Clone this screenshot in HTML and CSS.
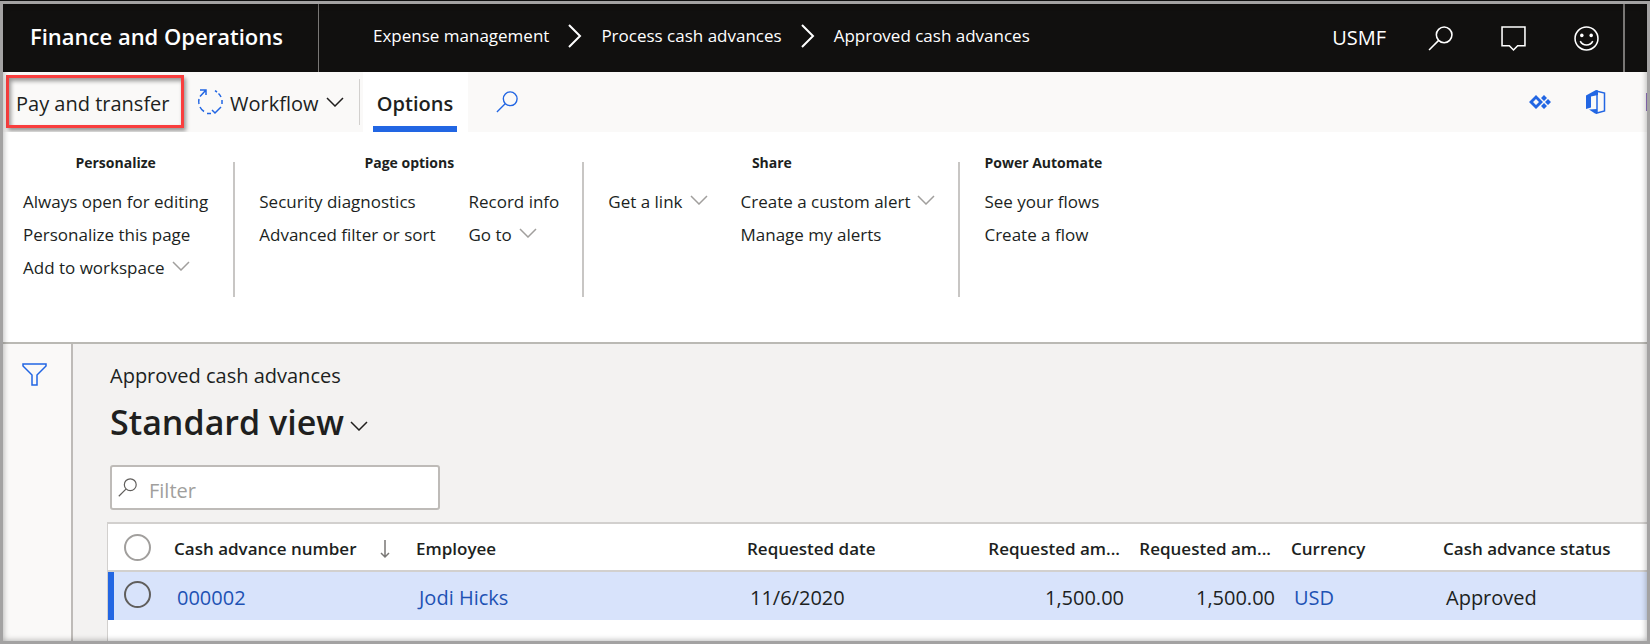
FILE: index.html
```html
<!DOCTYPE html>
<html lang="en">
<head>
<meta charset="utf-8">
<title>Approved cash advances</title>
<link rel="stylesheet" href="styles.css">
</head>
<body>
<svg class="defs" aria-hidden="true">
  <symbol id="search" viewBox="0 0 24 24"><circle cx="15.5" cy="8.5" r="7.5"/><path d="M10 14L1 23"/></symbol>
  <symbol id="down" viewBox="0 0 18 10"><path d="M1 1l8 8 8-8"/></symbol>
  <symbol id="right" viewBox="0 0 14 24"><path d="M1 1l11 11L1 23"/></symbol>
</svg>
<div class="frame">
  <header class="topbar">
    <a class="brand" href="#">Finance and Operations</a>
    <nav class="crumbs" aria-label="Breadcrumb">
      <a href="#">Expense management</a>
      <svg class="icon crumb-sep"><use href="#right"/></svg>
      <a href="#">Process cash advances</a>
      <svg class="icon crumb-sep"><use href="#right"/></svg>
      <a href="#">Approved cash advances</a>
    </nav>
    <div class="tools">
      <button class="company">USMF</button>
      <div class="tool-icons">
        <button aria-label="Search"><svg class="icon i24"><use href="#search"/></svg></button>
        <button aria-label="Messages"><svg class="icon i24" viewBox="0 0 24 24"><path d="M1 1h22v18h-7l-4 4-4-4H1z"/></svg></button>
        <button aria-label="Feedback"><svg class="icon i24" viewBox="0 0 24 24"><circle cx="12" cy="12" r="11"/><path d="M6 14.500c2.500 5 9.500 5 12 0"/><g class="solid"><circle cx="7.500" cy="9" r="1.700"/><circle cx="16.500" cy="9" r="1.700"/></g></svg></button>
      </div>
    </div>
    <div class="edge"></div>
  </header>

  <div class="actions">
    <button class="pay">Pay and transfer</button>
    <button class="workflow">
      <svg class="icon i26 blue" viewBox="0 0 26 26"><path d="M3 1h6v5M9 1L3 7.500M2 10a11 11 0 0 0 0 5M3 18a11 11 0 0 0 4 4.500M10 24.500h4M15 21l3 3 6-6M25 15v-4M24 8a11 11 0 0 0-2.500-3.500M20 3l-2-1.300"/></svg>
      <span>Workflow</span>
      <svg class="icon chev"><use href="#down"/></svg>
    </button>
    <button class="tab">Options</button>
    <button class="find" aria-label="Search actions"><svg class="icon blue"><use href="#search"/></svg></button>
    <div class="apps">
      <button aria-label="Power Apps"><svg class="icon-fill" viewBox="0 0 22 14"><path fill-rule="evenodd" d="M7 0l7 7-7 7-7-7zM7 4L4 7l3 3 3-3z"/><path d="M15 0l3 3-3 3-3-3zM19 4l3 3-3 3-3-3zM15 8l3 3-3 3-3-3z"/></svg></button>
      <button aria-label="Office"><svg class="office" viewBox="0 0 20 24"><path class="solid" d="M0 5.500L10 0l2 .6V5L5 6.500v11L0 19z"/><path class="solid" d="M3 19.500l8-.5v5l-2-.5z"/><path class="line" d="M10 1l8.500 2v18L11 23V3"/></svg></button>
    </div>
    <div class="cut"></div>
  </div>

  <section class="ribbon">
    <div class="group">
      <h2>Personalize</h2>
      <div class="cols"><div class="col">
        <button>Always open for editing</button>
        <button>Personalize this page</button>
        <button>Add to workspace <svg class="icon chev grey"><use href="#down"/></svg></button>
      </div></div>
    </div>
    <div class="group">
      <h2>Page options</h2>
      <div class="cols">
        <div class="col">
          <button>Security diagnostics</button>
          <button>Advanced filter or sort</button>
        </div>
        <div class="col">
          <button>Record info</button>
          <button>Go to <svg class="icon chev grey"><use href="#down"/></svg></button>
        </div>
      </div>
    </div>
    <div class="group">
      <h2>Share</h2>
      <div class="cols">
        <div class="col">
          <button>Get a link <svg class="icon chev grey"><use href="#down"/></svg></button>
        </div>
        <div class="col">
          <button>Create a custom alert <svg class="icon chev grey"><use href="#down"/></svg></button>
          <button>Manage my alerts</button>
        </div>
      </div>
    </div>
    <div class="group">
      <h2>Power Automate</h2>
      <div class="cols"><div class="col">
        <button>See your flows</button>
        <button>Create a flow</button>
      </div></div>
    </div>
  </section>

  <div class="body">
    <aside class="rail">
      <button aria-label="Show filters"><svg class="icon blue funnel" viewBox="0 0 25 23"><path d="M1 1h23v2l-9 9v10h-5V12L1 3z"/></svg></button>
    </aside>
    <main class="main">
      <p class="caption">Approved cash advances</p>
      <h1><button>Standard view <svg class="icon chev"><use href="#down"/></svg></button></h1>
      <label class="filter">
        <svg class="icon"><use href="#search"/></svg>
        <input type="text" placeholder="Filter" aria-label="Filter">
      </label>
      <div class="grid">
        <table>
          <colgroup><col class="c-mark"><col class="c-num"><col class="c-emp"><col class="c-date"><col class="c-amt"><col class="c-amt"><col class="c-cur"><col></colgroup>
          <thead>
            <tr>
              <th><input type="radio" name="all" aria-label="Select all"></th>
              <th><div class="sorted">Cash advance number <svg class="icon sort" viewBox="0 0 10 20"><path d="M5 1v17M1 14l4 4 4-4"/></svg></div></th>
              <th>Employee</th>
              <th>Requested date</th>
              <th class="num">Requested am...</th>
              <th class="num">Requested am...</th>
              <th class="cur">Currency</th>
              <th>Cash advance status</th>
            </tr>
          </thead>
          <tbody>
            <tr>
              <td><input type="radio" name="row" aria-label="Select 000002"></td>
              <td><a href="#">000002</a></td>
              <td><a href="#">Jodi Hicks</a></td>
              <td>11/6/2020</td>
              <td class="num">1,500.00</td>
              <td class="num">1,500.00</td>
              <td class="cur"><a href="#">USD</a></td>
              <td>Approved</td>
            </tr>
          </tbody>
        </table>
      </div>
    </main>
  </div>
</div>
</body>
</html>
```
FILE: styles.css
```css
* { box-sizing: border-box; }
body {
  margin: 0;
  border-top: 1px solid #111;
  font-family: "Open Sans", "Noto Sans", sans-serif;
  font-size: 17px;
  line-height: 24px;
  color: #201f1e;
}
button { font: inherit; color: inherit; background: none; border: 0; padding: 0; white-space: nowrap; text-align: left; }
a { color: inherit; text-decoration: none; }
h1, h2, p { margin: 0; }
.defs { position: absolute; width: 0; height: 0; }
.icon { flex: none; fill: none; stroke: currentColor; stroke-width: 1.5; overflow: visible; }
.solid { fill: currentColor; stroke: none; }
.i24 { display: block; width: 25px; height: 25px; }
.i26 { width: 26px; height: 26px; }
.blue { color: #2266e3; }
.grey { color: #a19f9d; }
.chev { width: 18px; height: 10px; }

.frame {
  position: relative;
  display: flex;
  flex-direction: column;
  min-height: calc(100vh - 1px);
  border: 3px solid #a3a2a2;
}
.frame::after {
  content: "";
  position: absolute;
  inset: 0;
  box-shadow: inset 0 0 6px rgba(0, 0, 0, .35);
  pointer-events: none;
}

.topbar { display: flex; align-items: center; height: 68px; background: #11100f; color: #fff; }
.brand {
  display: flex;
  align-items: center;
  align-self: stretch;
  width: 316px;
  padding: 0 0 4px 27px;
  border-right: 1px solid #797775;
  font-size: 22px;
  font-weight: 600;
}
.crumbs { display: flex; align-items: center; gap: 19px; padding: 0 0 4px 54px; }
.crumb-sep { width: 14px; height: 24px; stroke-width: 2; }
.tools { display: flex; align-items: center; gap: 42px; margin-left: auto; padding-right: 24px; }
.tool-icons { display: flex; gap: 48px; }
.company { font-size: 20px; }
.edge { align-self: stretch; width: 24px; border-left: 2px solid #797775; }

.actions { display: flex; align-items: center; height: 60px; background: #faf9f8; font-size: 20px; }
.pay {
  height: 53px;
  width: 178px;
  margin: 0 13px 2px 3px;
  padding: 5px 0 0 7px;
  border: 3px solid #f93e3e;
  box-shadow: 2px 3px 4px rgba(0, 0, 0, .4), inset 2px 3px 4px rgba(0, 0, 0, .4);
}
.workflow { display: flex; align-items: center; gap: 7px; height: 46px; padding-right: 15px; border-right: 1px solid #d2d0ce; }
.workflow span { padding-top: 4px; }
.tab { position: relative; align-self: stretch; width: 105px; margin-left: 3px; padding-top: 4px; background: #fff; font-weight: 600; text-align: center; }
.tab::after { content: ""; position: absolute; left: 10px; right: 11px; bottom: 0; height: 6px; background: #2266e3; }
.find { margin-left: 28px; }
.find .icon { display: block; width: 22px; height: 22px; }
.apps { display: flex; align-items: center; gap: 35px; margin-left: auto; padding-right: 40px; }
.icon-fill { display: block; width: 22px; height: 14px; fill: #2266e3; }
.office { display: block; width: 20px; height: 24px; color: #2266e3; }
.line { fill: none; stroke: currentColor; stroke-width: 1.5; }
.cut { width: 1px; height: 18px; background: #9373c0; }

.ribbon { display: flex; height: 212px; padding: 20px 0 45px; background: #fff; border-bottom: 2px solid #bab9b4; }
.group { padding: 0 23px 0 24px; border-left: 2px solid #c8c6c4; margin-top: 10px; }
.group:first-child { padding: 0 25px 0 20px; border-left: 0; }
.group h2 { margin: -10px 0 11px; font-size: 14px; line-height: 22px; font-weight: 700; text-align: center; }
.cols { display: flex; gap: 33px; }
.col { display: flex; flex-direction: column; align-items: flex-start; }
.col button { display: flex; align-items: center; gap: 7px; height: 33px; }
.col .chev { margin-bottom: 3px; }

.body { display: flex; flex: 1; background: #f3f2f1; }
.rail { width: 70px; padding: 19px; background: #faf9f8; border-right: 2px solid #bebbb8; }
.funnel { display: block; width: 25px; height: 23px; }
.main { flex: 1; display: flex; flex-direction: column; padding: 19px 0 0 34px; }
.caption { margin-left: 3px; font-size: 20px; line-height: 26px; }
h1 { margin: 10px 0 20px 3px; font-size: 34px; line-height: 46px; font-weight: 600; }
h1 button { display: flex; align-items: center; gap: 6px; }
h1 .icon { margin-top: 8px; }
.filter { display: flex; align-items: center; gap: 12px; width: 330px; height: 45px; margin: 0 0 12px 3px; padding: 0 6px; background: #fff; border: 2px solid #bebbb8; border-radius: 3px; }
.filter .icon { width: 19px; height: 19px; color: #605e5c; }
.filter input { flex: 1; min-width: 0; padding: 6px 0 0; border: 0; outline: 0; background: none; font: inherit; font-size: 20px; }
.filter input::placeholder { color: #a19f9d; opacity: 1; }

.grid { flex: 1; background: #fff; border-top: 2px solid #d2d0ce; border-left: 1px solid #d2d0ce; }
table { width: 100%; border-spacing: 0; table-layout: fixed; }
th, td { height: 48px; padding: 0; text-align: left; white-space: nowrap; }
th { padding-top: 3px; border-bottom: 2px solid #d2d0ce; font-weight: 600; }
td { padding: 3px 0 0 3px; background: #d8e3fb; font-size: 20px; }
td:first-child { padding: 0 0 3px 10px; border-left: 6px solid #2266e3; }
th:first-child { padding: 0 0 0 16px; }
td a { color: #1e52b4; }
.c-mark { width: 66px; }
.c-num { width: 242px; }
.c-emp { width: 331px; }
.c-date { width: 226px; }
.c-amt { width: 151px; }
.c-cur { width: 168px; }
.num { text-align: right; }
th.num { padding-right: 4px; }
th.cur { padding-left: 16px; }
td.cur { padding-left: 19px; }
.sorted { display: flex; align-items: center; gap: 23px; }
.sort { width: 10px; height: 20px; color: #797775; }
input[type="radio"] { appearance: none; display: block; width: 27px; height: 27px; margin: 0; border: 2px solid #a19f9d; border-radius: 50%; }
td input[type="radio"] { border-color: #605e5c; }
```
